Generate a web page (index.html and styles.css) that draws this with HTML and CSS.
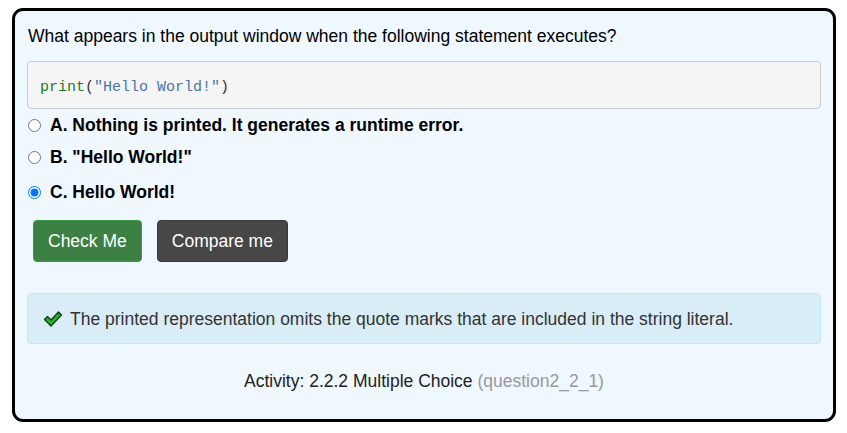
FILE: index.html
```html
<!DOCTYPE html>
<html>
<head>
<meta charset="utf-8">
<link rel="stylesheet" href="styles.css">
</head>
<body>
<div class="card">
  <p class="question">What appears in the output window when the following statement executes?</p>
  <pre class="code"><span class="fn">print</span><span class="pn">(</span><span class="str">"Hello World!"</span><span class="pn">)</span></pre>
  <ul class="options">
    <li class="option"><input type="radio" name="q" class="radio"><label>A. Nothing is printed. It generates a runtime error.</label></li>
    <li class="option opt-b"><input type="radio" name="q" class="radio"><label>B. "Hello World!"</label></li>
    <li class="option opt-c"><input type="radio" name="q" class="radio" checked><label>C. Hello World!</label></li>
  </ul>
  <div class="buttons">
    <button class="btn btn-check">Check Me</button>
    <button class="btn btn-compare">Compare me</button>
  </div>
  <div class="feedback">
    <svg class="check" width="20" height="18" viewBox="0 0 20 18"><path d="M1.5 9.5 L4.5 6.5 L8 10 L15.5 2 L18.5 5 L8 16 Z" fill="#22b822" stroke="#1a3a1a" stroke-width="1.4" stroke-linejoin="round"/></svg>
    <span>The printed representation omits the quote marks that are included in the string literal.</span>
  </div>
  <div class="activity">Activity: 2.2.2 Multiple Choice <span class="qid">(question2_2_1)</span></div>
</div>
</body>
</html>
```
FILE: styles.css
```css
html, body {
  margin: 0;
  padding: 0;
  background: #ffffff;
}
body {
  font-family: "Liberation Sans", Arial, sans-serif;
  font-size: 17.5px;
  color: #000;
}
.card {
  margin: 8px 11px 0 12px;
  height: 414px;
  box-sizing: border-box;
  border: 3px solid #000;
  border-radius: 11px;
  background: #eff7ff;
  padding: 12px 12px 0 12px;
}
.question {
  margin: 0 0 0 1px;
  line-height: 20px;
  padding-top: 3px;
}
.code {
  margin: 15px 0 0 0;
  background: #f5f5f5;
  border: 1px solid #cccccc;
  border-radius: 4px;
  padding: 16px 12px 11px 12px;
  font-family: "Liberation Mono", monospace;
  font-size: 15px;
  line-height: 19px;
}
.fn { color: #1f7a1f; }
.pn { color: #333333; }
.str { color: #4a77a8; }
.options {
  list-style: none;
  margin: 4px 0 0 0;
  padding: 0;
}
.option {
  display: flex;
  align-items: center;
  height: 24px;
  font-weight: bold;
  line-height: 20px;
}
.opt-b { margin-top: 8px; }
.opt-c { margin-top: 11px; }
.radio {
  margin: 0 9px 0 1px;
  width: 13px;
  height: 13px;
}
.buttons {
  display: flex;
  gap: 15px;
  margin: 16px 0 0 6px;
}
.btn {
  font-family: "Liberation Sans", Arial, sans-serif;
  font-size: 17.5px;
  line-height: 24px;
  padding: 8px 14px;
  border-radius: 4px;
  color: #fff;
  border: 1px solid transparent;
}
.btn-check {
  background: #3d8044;
  border-color: #3a9a44;
}
.btn-compare {
  background: #474747;
  border-color: #3a3a3a;
}
.feedback {
  margin-top: 31px;
  display: flex;
  align-items: center;
  gap: 7px;
  background: #d9edf7;
  border: 1px solid #bce8f1;
  border-radius: 4px;
  padding: 14px 15px 13px 15px;
  color: #333;
  line-height: 22px;
}
.check { flex: none; }
.activity {
  text-align: center;
  margin-top: 27px;
  color: #222;
  line-height: 20px;
}
.qid { color: #999; }
```
